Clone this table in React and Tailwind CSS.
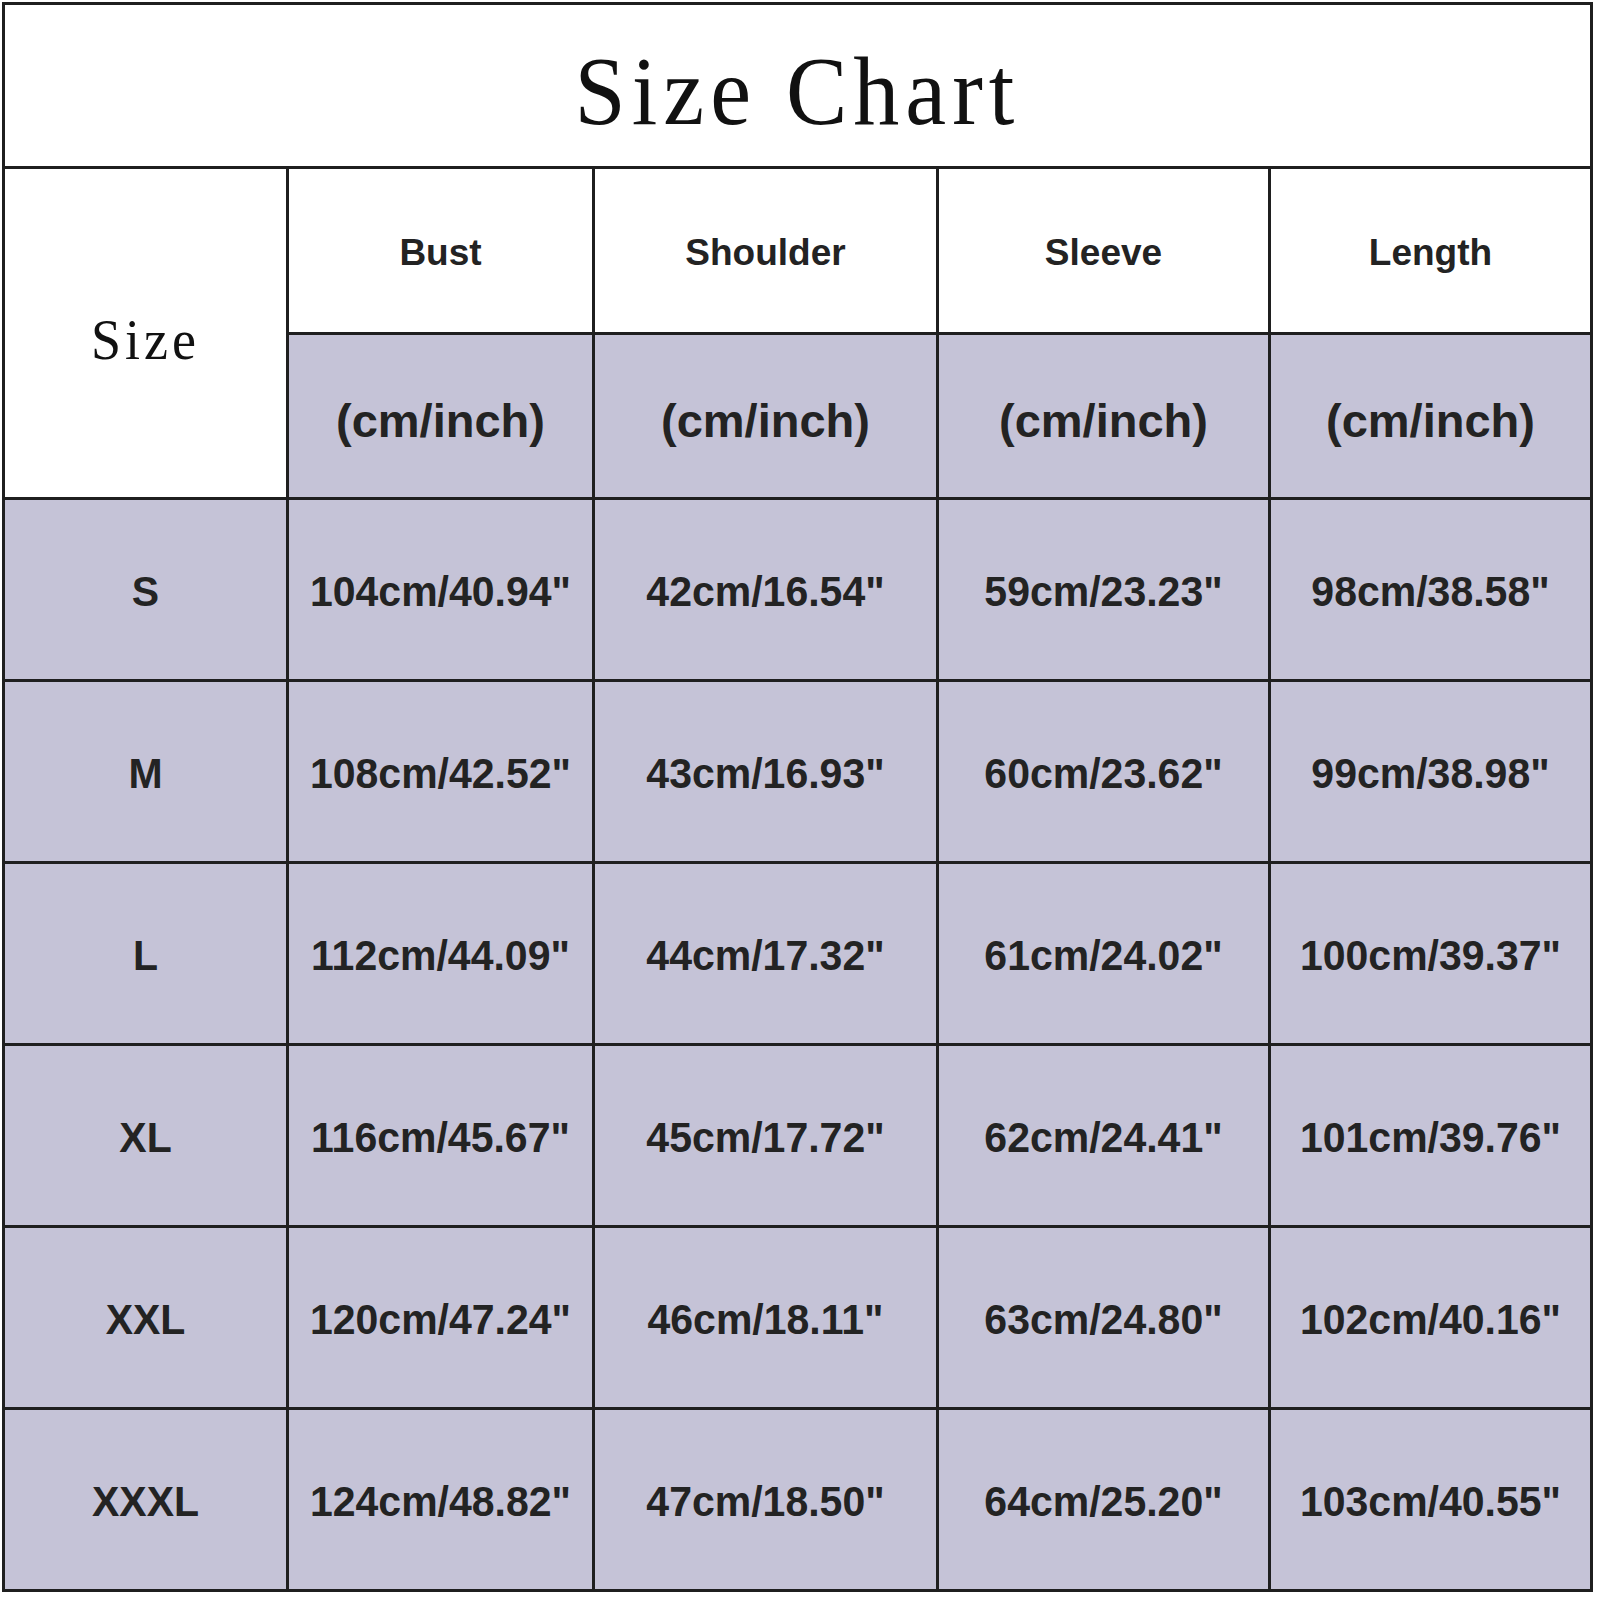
import React from 'react';

const columns = ['Bust', 'Shoulder', 'Sleeve', 'Length'];

const rows = [
  ['S', '104cm/40.94"', '42cm/16.54"', '59cm/23.23"', '98cm/38.58"'],
  ['M', '108cm/42.52"', '43cm/16.93"', '60cm/23.62"', '99cm/38.98"'],
  ['L', '112cm/44.09"', '44cm/17.32"', '61cm/24.02"', '100cm/39.37"'],
  ['XL', '116cm/45.67"', '45cm/17.72"', '62cm/24.41"', '101cm/39.76"'],
  ['XXL', '120cm/47.24"', '46cm/18.11"', '63cm/24.80"', '102cm/40.16"'],
  ['XXXL', '124cm/48.82"', '47cm/18.50"', '64cm/25.20"', '103cm/40.55"'],
];

const sans = "font-['Liberation_Sans',Arial,sans-serif] font-bold text-[#232323]";
const serif = "font-['Liberation_Serif','Times_New_Roman',serif] text-[#111]";

export default function App() {
  return (
    <div className="w-[1600px] h-[1600px] bg-white pt-[2px] pl-[2px]">
      <div className="grid w-[1591px] grid-cols-[281px_303px_341px_329px_319px] grid-rows-[161px_163px_162px_repeat(6,179px)] gap-[3px] bg-[#1f1f1f] p-[3px]">
        {/* Title */}
        <div className="col-span-5 flex items-center justify-center bg-white pt-[10px]">
          <span className={`${serif} inline-block scale-y-105 text-[92px] leading-none tracking-[6px]`}>Size Chart</span>
        </div>

        {/* Size header, spans both header rows */}
        <div className="row-span-2 flex items-center justify-center bg-white pt-[14px]">
          <span className={`${serif} inline-block scale-y-105 text-[54px] leading-none tracking-[4px]`}>Size</span>
        </div>

        {columns.map((c) => (
          <div key={c} className="flex items-center justify-center bg-white pt-[4px]">
            <span className={`${sans} text-[37px] leading-none`}>{c}</span>
          </div>
        ))}

        {columns.map((c) => (
          <div key={c + '-unit'} className="flex items-center justify-center bg-[#c5c3d7] pt-[8px]">
            <span className={`${sans} text-[47px] leading-none`}>(cm/inch)</span>
          </div>
        ))}

        {rows.map((row) =>
          row.map((cell, i) => (
            <div key={row[0] + i} className="flex items-center justify-center bg-[#c5c3d7] pt-[4px]">
              <span className={`${sans} inline-block scale-y-105 text-[41px] leading-none`}>{cell}</span>
            </div>
          ))
        )}
      </div>
    </div>
  );
}
